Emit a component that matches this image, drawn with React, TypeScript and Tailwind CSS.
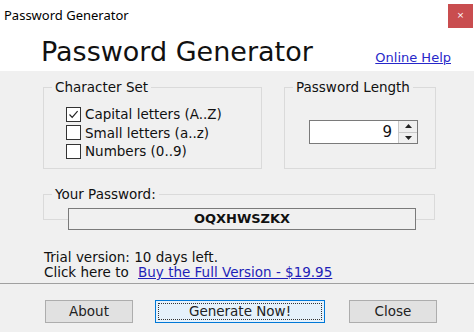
import React from "react";

const font = { fontFamily: '"DejaVu Sans", Verdana, sans-serif' };

function Group({
  label,
  className,
  children,
}: {
  label: string;
  className: string;
  children?: React.ReactNode;
}) {
  return (
    <div className={"relative border border-[#dadada] " + className}>
      <span className="absolute left-[8px] top-[-9px] bg-[#f0f0f0] px-[3px] text-[13.5px] leading-[16px] text-[#111]">
        {label}
      </span>
      {children}
    </div>
  );
}

function Check({ checked, label }: { checked?: boolean; label: string }) {
  return (
    <div className="flex h-[18.5px] items-center gap-[4px]">
      <div className="flex h-[15px] w-[15px] items-center justify-center border border-[#333] bg-white">
        {checked && (
          <svg width="11" height="11" viewBox="0 0 11 11">
            <path d="M1.5 5.5 L4.2 8.3 L9.6 2.2" fill="none" stroke="#222" strokeWidth="1.2" />
          </svg>
        )}
      </div>
      <span className="text-[13.5px] text-[#111]">{label}</span>
    </div>
  );
}

function Btn({ children, focused }: { children: React.ReactNode; focused?: boolean }) {
  return (
    <button
      type="button"
      className={
        focused
          ? "flex h-[23px] w-[170px] items-center justify-center border border-[#0078d7] bg-[#e5f1fb] p-[2px] text-[13.5px] text-[#222]"
          : "flex h-[23px] w-[88px] items-center justify-center border border-[#adadad] bg-[#e1e1e1] text-[13.5px] text-[#222]"
      }
    >
      {focused ? (
        <span className="flex h-full w-full items-center justify-center border border-dotted border-[#333]">
          {children}
        </span>
      ) : (
        children
      )}
    </button>
  );
}

export default function App() {
  return (
    <div className="flex h-[332px] w-[474px] flex-col overflow-hidden bg-white" style={font}>
      {/* title bar */}
      <div className="flex h-[32px] items-start justify-between">
        <span
          className="pl-[4px] pt-[6px] text-[13px] text-black"
          style={{ fontFamily: '"Noto Sans", "Open Sans", sans-serif' }}
        >
          Password Generator
        </span>
        <div className="mr-[1px] mt-[4px] flex h-[24px] w-[25px] items-center justify-center bg-[#c94d4f] text-[9px] text-white">
          ×
        </div>
      </div>

      {/* header */}
      <div className="flex h-[39px] items-center justify-between pl-[41px] pr-[23px]">
        <span className="text-[27px] leading-none text-[#111]">Password Generator</span>
        <a className="mt-[12px] text-[13px] text-[#2727c9] underline">Online Help</a>
      </div>

      {/* body */}
      <div className="flex flex-1 flex-col bg-[#f0f0f0]">
        <div className="flex gap-[22px] pl-[43px] pt-[16px]">
          <Group label="Character Set" className="h-[82px] w-[219px] pl-[22px] pt-[17px]">
            <Check checked label="Capital letters (A..Z)" />
            <Check label="Small letters (a..z)" />
            <Check label="Numbers (0..9)" />
          </Group>
          <Group label="Password Length" className="h-[82px] w-[152px] pl-[24px] pt-[32px]">
            <div className="flex h-[24px] w-[109px] border border-[#7a7a7a]">
              <div className="flex flex-1 items-center justify-end bg-white pr-[6px] text-[15px] text-[#111]">9</div>
              <div className="flex w-[19px] flex-col border-l border-[#c8c8c8] bg-[#f0f0f0]">
                <div className="flex flex-1 items-center justify-center border-b border-[#c8c8c8]">
                  <svg width="7" height="4" viewBox="0 0 7 4"><path d="M0 4 L3.5 0 L7 4 Z" fill="#222" /></svg>
                </div>
                <div className="flex flex-1 items-center justify-center">
                  <svg width="7" height="4" viewBox="0 0 7 4"><path d="M0 0 L3.5 4 L7 0 Z" fill="#222" /></svg>
                </div>
              </div>
            </div>
          </Group>
        </div>

        {/* your password */}
        <div className="pl-[43px] pt-[25px]">
          <Group label="Your Password:" className="h-[26px] w-[392px]" />
          <div className="relative -mt-[12px] ml-[25px] flex h-[22px] w-[348px] items-center justify-center border border-[#7a7a7a] bg-[#f0f0f0] text-[13px] font-bold text-[#111]">
            OQXHWSZKX
          </div>
        </div>

        {/* trial */}
        <div className="pl-[44px] pt-[20px] text-[13.5px] leading-[15px] text-[#111]">
          <div>Trial version: 10 days left.</div>
          <div>
            Click here to{" "}
            <a className="ml-[5px] text-[#1f1fb8] underline">Buy the Full Version - $19.95</a>
          </div>
        </div>

        <div className="mt-[3px] h-px bg-[#a0a0a0]" />

        <div className="flex items-center pl-[45px] pt-[16px]">
          <Btn>About</Btn>
          <div className="ml-[22px]">
            <Btn focused>Generate Now!</Btn>
          </div>
          <div className="ml-[24px]">
            <Btn>Close</Btn>
          </div>
        </div>
      </div>
    </div>
  );
}
